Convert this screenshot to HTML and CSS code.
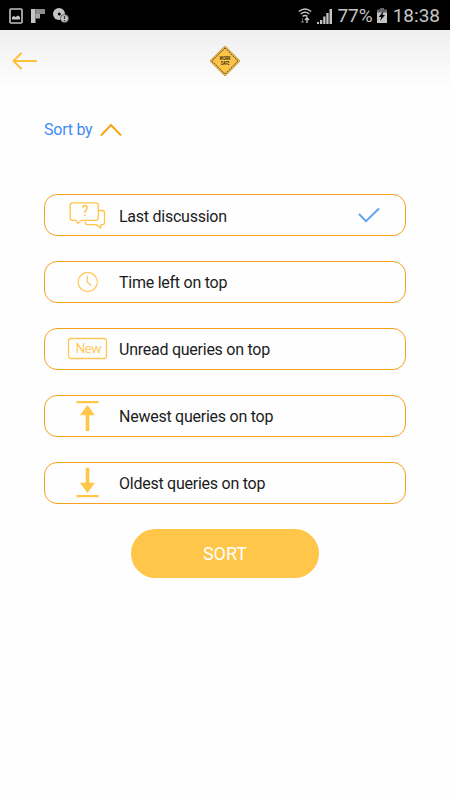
FILE: index.html
```html
<!DOCTYPE html>
<html lang="en">
<head>
    <meta charset="UTF-8">
    <meta name="viewport" content="width=device-width, initial-scale=1.0">
    <title>Work Safe - Sort queries</title>
    <link rel="stylesheet" href="styles.css">
</head>
<body>
    <div class="status-bar">
        <div class="status-left">
            <svg width="14" height="16" viewBox="0 0 14 16">
                <rect x="1" y="1" width="12" height="14" rx="1" fill="none" stroke="#c4c4c4" stroke-width="1.6"/>
                <path d="M3 11.500V9l2-1 1.500 1L9 7.500 11 9v2.500z" fill="#c4c4c4"/>
            </svg>
            <svg width="14" height="14" viewBox="0 0 14 14">
                <path d="M0 0h4.500v14H0z" fill="#c4c4c4"/>
                <path d="M4.500 0H14v5H4.500z" fill="#8c8c8c"/>
                <path d="M4.500 5H9v4.500H4.500z" fill="#a8a8a8"/>
            </svg>
            <svg width="16" height="15" viewBox="0 0 16 15">
                <circle cx="6" cy="6" r="6" fill="#c4c4c4"/>
                <circle cx="6.300" cy="6" r="1.500" fill="#000"/>
                <circle cx="11.500" cy="10.500" r="4" fill="#c4c4c4" stroke="#444" stroke-width=".8"/>
                <path d="M11.500 8v3M11.500 12v1.200" stroke="#333" stroke-width="1.300"/>
            </svg>
        </div>
        <div class="status-right">
            <svg width="14" height="16" viewBox="0 0 14 16">
                <g fill="none" stroke="#c4c4c4" stroke-width="1.500">
                    <path d="M.8 3.500Q7-1.500 13.200 3.500"/>
                    <path d="M2.800 6Q7 2.700 11.200 6"/>
                    <path d="M4.600 8.400Q7 6.600 9.400 8.400"/>
                </g>
                <path d="M4.500 10v5M3 13l1.500 2L6 13" fill="none" stroke="#666"/>
                <path d="M9 15v-5M7 12l2-2.300 2 2.300" fill="none" stroke="#c4c4c4" stroke-width="1.400"/>
            </svg>
            <svg width="15" height="16" viewBox="0 0 15 16">
                <path d="M0 16v-2h2v2zM3 16v-4h2.300v4zM6.200 16V8.500h2.300V16zM9.300 16V5h2.300v11zM12.500 16V1H15v15z" fill="#c4c4c4"/>
            </svg>
            <span class="battery-level">77%</span>
            <svg width="10" height="15" viewBox="0 0 10 15">
                <path d="M0 1.500h3V0h4v1.500h3V5H0z" fill="#666"/>
                <path d="M0 4.500h10V15H0z" fill="#c4c4c4"/>
                <path d="M6.500 3L1.800 9h2.500L3 13l5-6H5.500z" fill="#000"/>
            </svg>
            <span class="clock">18:38</span>
        </div>
    </div>

    <header class="header">
        <a href="#" class="back" aria-label="Back">
            <svg width="26" height="20" viewBox="0 0 26 20">
                <path d="M10 2.500L2.500 10l7.500 7.500M3 10h22" fill="none" stroke="#ffc039" stroke-width="2" stroke-linecap="round" stroke-linejoin="round"/>
            </svg>
        </a>
        <svg class="logo" width="32" height="32" viewBox="0 0 32 32">
            <rect x="5.200" y="5.200" width="21.600" height="21.600" rx="1.500" transform="rotate(45 16 16)" fill="#fdc548" stroke="#c29a48" stroke-width=".8"/>
            <rect x="6.700" y="6.700" width="18.600" height="18.600" transform="rotate(45 16 16)" fill="none" stroke="#73613a" stroke-width="1" stroke-dasharray="2 .7"/>
            <text class="logo-text" x="16" y="15.300" textLength="11" lengthAdjust="spacingAndGlyphs">WORK</text>
            <text class="logo-text" x="16" y="20" textLength="8.500" lengthAdjust="spacingAndGlyphs">SAFE</text>
        </svg>
    </header>

    <main class="content">
        <div class="sort-title">
            <span>Sort by</span>
            <svg width="22" height="14" viewBox="0 0 22 14">
                <path d="M1 13.500L11 3l10 10.500" fill="none" stroke="#f8a51b" stroke-width="2"/>
            </svg>
        </div>

        <div class="options">
            <div class="option">
                <svg class="option-icon" viewBox="0 0 44 40">
                    <path d="M6.500 7.800h23.300q2.500 0 2.500 2.500v12.500q0 2.500-2.500 2.500H16l-4.200 3-1.500-3H6.500Q4.200 25.300 4.200 23V10.300q0-2.500 2.300-2.500z" fill="none" stroke="#ffc649" stroke-width="1.300"/>
                    <path d="M32.300 15.500h4q2.200 0 2.200 2.200v9.800q0 2.200-2.200 2.200h-1.200l-.5 3.200-4.600-3.200h-8.500q-2.300 0-2.300-3.200" fill="none" stroke="#ffc649" stroke-width="1.300"/>
                    <text class="question" x="19" y="20.800">?</text>
                </svg>
                <span class="option-label">Last discussion</span>
                <svg class="check" width="22" height="16" viewBox="0 0 22 16">
                    <path d="M1 7l7 7.200L21 1.500" fill="none" stroke="#5a9ff0" stroke-width="1.800"/>
                </svg>
            </div>
            <div class="option">
                <svg class="option-icon" viewBox="0 0 44 40">
                    <circle cx="21.700" cy="20" r="9.600" fill="none" stroke="#ffc65a" stroke-width="1.200"/>
                    <path d="M21.400 13.800V20l3.800 3.700" fill="none" stroke="#ffc65a" stroke-width="1.200"/>
                </svg>
                <span class="option-label">Time left on top</span>
            </div>
            <div class="option">
                <svg class="option-icon" viewBox="0 0 44 40">
                    <rect x="2.500" y="9.500" width="38" height="20" rx="2.500" fill="none" stroke="#ffc65a" stroke-width="1.300"/>
                    <text class="new-text" x="9.500" y="23.600" textLength="26">New</text>
                </svg>
                <span class="option-label">Unread queries on top</span>
            </div>
            <div class="option">
                <svg class="option-icon" viewBox="0 0 44 40">
                    <path d="M10.500 5h22v2.200h-22zM21.500 9l7.400 10.300h-5.600V35h-3.600V19.300H14z" fill="#ffc649"/>
                </svg>
                <span class="option-label">Newest queries on top</span>
            </div>
            <div class="option">
                <svg class="option-icon" viewBox="0 0 44 40">
                    <path d="M10.500 32h22v2.200h-22zM21.500 30l7.400-10.300h-5.600v-15h-3.600v15H14z" fill="#ffc649"/>
                </svg>
                <span class="option-label">Oldest queries on top</span>
            </div>
        </div>

        <button class="btn-sort">SORT</button>
    </main>
</body>
</html>
```

FILE: styles.css
```css
* {
    margin: 0;
    padding: 0;
    box-sizing: border-box;
}

body {
    font-family: Roboto, 'Liberation Sans', sans-serif;
    background: #fefefe;
    min-height: 100vh;
    color: #1c1c1c;
}

svg {
    display: block;
    flex: none;
}

.status-bar {
    display: flex;
    justify-content: space-between;
    align-items: center;
    height: 30px;
    padding: 1px 10px 0 9px;
    background: #000;
    color: #c4c4c4;
    font-size: 19px;
}

.status-left {
    display: flex;
    align-items: center;
    gap: 8px;
}

.status-right {
    display: flex;
    align-items: center;
    gap: 5px;
}

.battery-level {
    margin-right: -1px;
}

.clock {
    margin-left: 1px;
}

.header {
    display: grid;
    grid-template-columns: 1fr auto 1fr;
    align-items: center;
    height: 62px;
    padding: 0 11px;
    background: linear-gradient(#efefef, #fefefe 92%);
}

.back {
    justify-self: start;
}

.logo-text {
    font-size: 5.5px;
    font-weight: 700;
    text-anchor: middle;
    fill: #3d3110;
}

.content {
    padding: 25px 44px 0;
}

.sort-title {
    display: flex;
    align-items: center;
    gap: 8px;
    height: 24px;
    color: #3f8cf3;
    font-size: 16px;
    letter-spacing: -0.25px;
}

.options {
    display: flex;
    flex-direction: column;
    gap: 24.9px;
    margin-top: 53px;
}

.option {
    display: flex;
    align-items: center;
    height: 42px;
    padding: 0 25px 0 21px;
    border: 1px solid #f6a11c;
    border-radius: 13px;
    font-size: 16px;
    letter-spacing: -0.25px;
}

.option-icon {
    width: 44px;
    height: 40px;
    margin-right: 9px;
}

.option-label {
    padding-top: 2px;
}

.check {
    margin-left: auto;
}

.question {
    font-size: 14px;
    text-anchor: middle;
    fill: #ffbd33;
}

.new-text {
    font-family: Lato, sans-serif;
    font-size: 13px;
    letter-spacing: 0;
    fill: #ffc65a;
}

.btn-sort {
    display: block;
    width: 188px;
    height: 49px;
    margin: 25px auto 0;
    padding-top: 1px;
    border: none;
    border-radius: 25px;
    background: #ffc649;
    color: #fff;
    font-family: inherit;
    font-size: 18px;
    cursor: pointer;
}
```
